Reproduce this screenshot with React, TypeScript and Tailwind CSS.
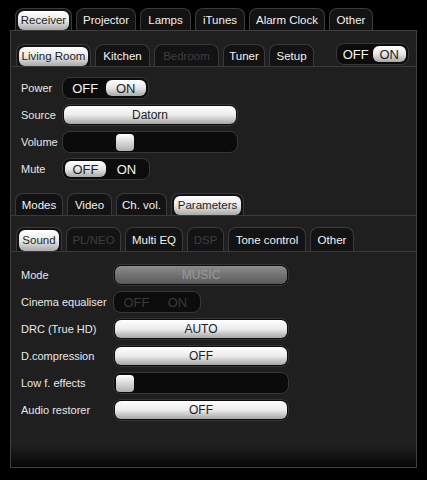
import React from 'react';

type TabProps = { label: string; w: number; active?: boolean; disabled?: boolean; h?: string };

const Tab: React.FC<TabProps> = ({ label, w, active, disabled, h = 'h-[22px]' }) => (
  <div
    style={{ width: w }}
    className={`${h} shrink-0 rounded-t-[8px] border border-b-0 border-[#3a3a3a] bg-[#131313] p-[2px] pb-0`}
  >
    <div
      className={`flex h-full items-center justify-center rounded-[6px] text-[11.5px] leading-none ${
        active
          ? 'bg-gradient-to-b from-[#ffffff] via-[#e8e8e8] to-[#a9a9a9] text-[#1e1e1e] mb-[2px] h-[calc(100%-2px)]'
          : disabled
          ? 'text-[#3e3e3e]'
          : 'text-[#f2f2f2]'
      }`}
    >
      {label}
    </div>
  </div>
);

type ToggleProps = { on: boolean; w: number; disabled?: boolean; h?: string };

const Toggle: React.FC<ToggleProps> = ({ on, w, disabled, h = 'h-[22px]' }) => {
  const lit = 'bg-gradient-to-b from-[#ffffff] via-[#e6e6e6] to-[#a8a8a8] text-[#222]';
  const dark = disabled ? 'text-[#3a3a3a]' : 'text-[#f4f4f4]';
  return (
    <div
      style={{ width: w }}
      className={`${h} flex rounded-[8px] border border-[#393939] bg-[#0c0c0c] p-[2px] text-[13px] leading-none`}
    >
      <div className={`flex flex-1 items-center justify-center rounded-[6px] ${!on && !disabled ? lit : dark}`}>OFF</div>
      <div className={`flex flex-1 items-center justify-center rounded-[6px] ${on && !disabled ? lit : dark}`}>ON</div>
    </div>
  );
};

const Btn: React.FC<{ label: string; disabled?: boolean; h?: string }> = ({ label, disabled, h = 'h-[22px]' }) => (
  <div className={`${h} flex-1 rounded-[8px] border border-[#363636] bg-[#0c0c0c] p-[1px]`}>
    <div
      className={`flex h-full items-center justify-center rounded-[6px] text-[12px] leading-none ${
        disabled
          ? 'bg-gradient-to-b from-[#8c8c8c] to-[#5a5a5a] text-[#9a9a9a]'
          : 'bg-gradient-to-b from-[#ffffff] via-[#ececec] to-[#a6a6a6] text-[#1e1e1e]'
      }`}
    >
      {label}
    </div>
  </div>
);

const Slider: React.FC<{ pos: number; h?: string }> = ({ pos, h = 'h-[22px]' }) => (
  <div className={`${h} flex flex-1 items-center rounded-[8px] border border-[#363636] bg-[#0b0b0b] px-[1px]`}>
    <div style={{ marginLeft: pos }} className="h-[17px] w-[18px] rounded-[4px] bg-gradient-to-b from-[#ffffff] to-[#b0b0b0]" />
  </div>
);

const Row: React.FC<{ label: string; lw: string; children: React.ReactNode }> = ({ label, lw, children }) => (
  <div className="flex items-center">
    <div className={`${lw} shrink-0 text-[11px] text-[#e8e8e8]`}>{label}</div>
    {children}
  </div>
);

export default function App() {
  return (
    <div className="h-[480px] w-[427px] overflow-hidden bg-black pt-[8px] font-['Liberation_Sans',Arial,sans-serif]">
      {/* Top tabs */}
      <div className="flex gap-[4px] pl-[15px]">
        <Tab label="Receiver" w={57} active />
        <Tab label="Projector" w={60} />
        <Tab label="Lamps" w={51} />
        <Tab label="iTunes" w={50} />
        <Tab label="Alarm Clock" w={76} />
        <Tab label="Other" w={44} />
      </div>

      <div className="ml-[10px] flex h-[438px] w-[407px] flex-col border border-[#3f3f3f] bg-[#1f1f1f]">
        {/* Room tabs */}
        <div className="flex items-end border-b border-[#3a3a3a] pl-[5px] pr-[7px] pt-[12px]">
          <div className="flex gap-[4px]">
            <Tab label="Living Room" w={75} active />
            <Tab label="Kitchen" w={55} />
            <Tab label="Bedroom" w={65} disabled />
            <Tab label="Tuner" w={42} />
            <Tab label="Setup" w={45} />
          </div>
          <div className="ml-auto pb-[1px]">
            <Toggle on w={73} />
          </div>
        </div>

        {/* Receiver controls */}
        <div className="flex flex-col gap-[5px] pl-[10px] pt-[10px]">
          <Row label="Power" lw="w-[41px]">
            <Toggle on w={87} />
          </Row>
          <Row label="Source" lw="w-[41px]">
            <div className="flex w-[176px]">
              <Btn label="Datorn" />
            </div>
          </Row>
          <Row label="Volume" lw="w-[41px]">
            <div className="flex w-[176px]">
              <Slider pos={52} />
            </div>
          </Row>
          <Row label="Mute" lw="w-[41px]">
            <Toggle on={false} w={88} />
          </Row>
        </div>

        {/* Section tabs */}
        <div className="mt-[13px] flex gap-[4px] border-b border-[#3a3a3a] pl-[4px]">
          <Tab label="Modes" w={48} />
          <Tab label="Video" w={45} />
          <Tab label="Ch. vol." w={51} />
          <Tab label="Parameters" w={73} active />
        </div>

        <div className="mt-[11px] flex gap-[4px] border-b border-[#3a3a3a] pl-[5px]">
          <Tab label="Sound" w={46} active h="h-[24px]" />
          <Tab label="PL/NEO" w={55} disabled h="h-[24px]" />
          <Tab label="Multi EQ" w={58} h="h-[24px]" />
          <Tab label="DSP" w={37} disabled h="h-[24px]" />
          <Tab label="Tone control" w={78} h="h-[24px]" />
          <Tab label="Other" w={44} h="h-[24px]" />
        </div>

        {/* Sound parameters */}
        <div className="flex flex-col gap-[5px] pl-[10px] pt-[12px]">
          <Row label="Mode" lw="w-[92px]">
            <div className="flex w-[176px]">
              <Btn label="MUSIC" disabled />
            </div>
          </Row>
          <Row label="Cinema equaliser" lw="w-[92px]">
            <Toggle on={false} w={88} disabled />
          </Row>
          <Row label="DRC (True HD)" lw="w-[92px]">
            <div className="flex w-[176px]">
              <Btn label="AUTO" />
            </div>
          </Row>
          <Row label="D.compression" lw="w-[92px]">
            <div className="flex w-[176px]">
              <Btn label="OFF" />
            </div>
          </Row>
          <Row label="Low f. effects" lw="w-[92px]">
            <div className="flex w-[176px]">
              <Slider pos={1} />
            </div>
          </Row>
          <Row label="Audio restorer" lw="w-[92px]">
            <div className="flex w-[176px]">
              <Btn label="OFF" />
            </div>
          </Row>
        </div>

        <div className="mt-auto h-[22px] bg-gradient-to-b from-[#1f1f1f] to-[#070707]" />
      </div>
    </div>
  );
}
